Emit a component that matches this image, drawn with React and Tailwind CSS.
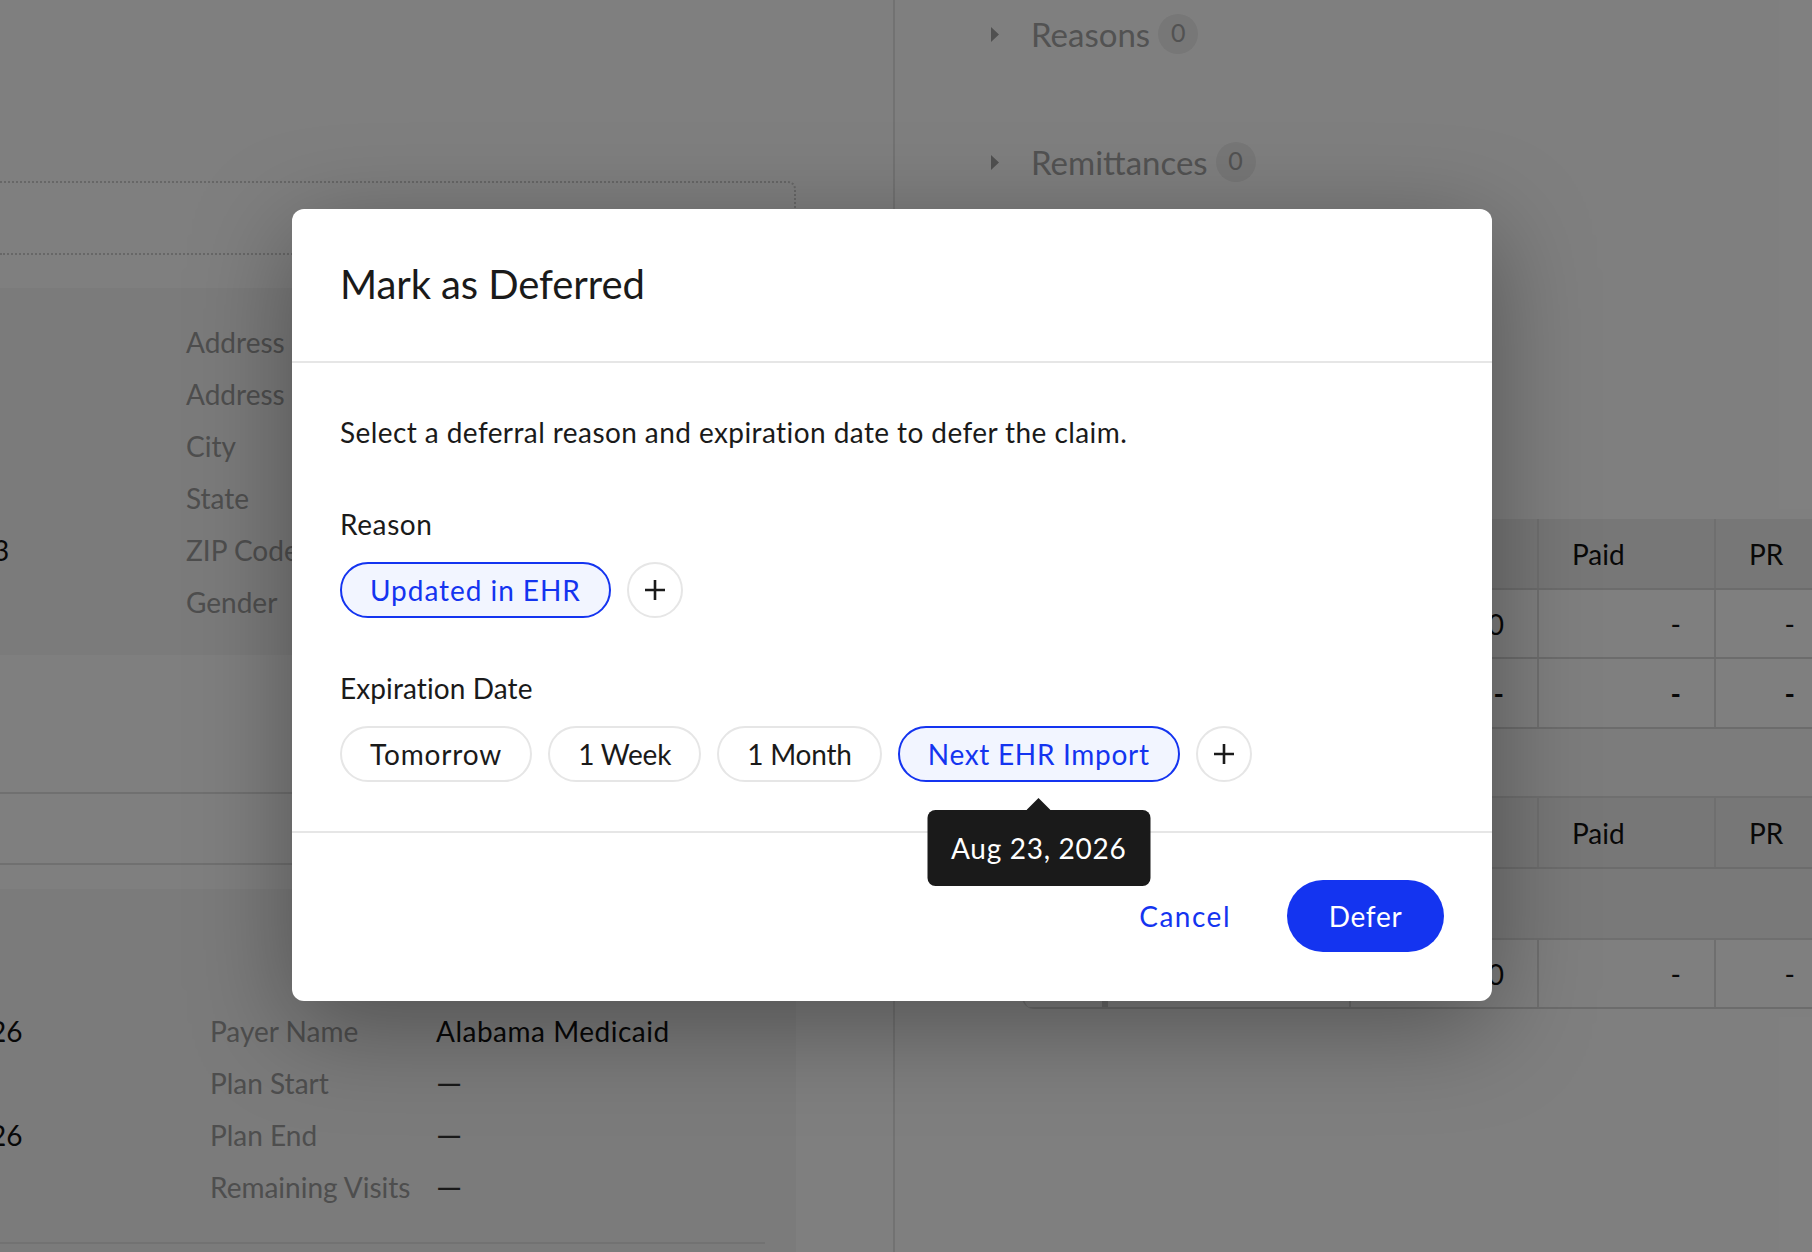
import React from "react";

function InfoRow({ value, label, labelClass }) {
  return (
    <div className="flex h-[52px] items-center">
      <div className="w-[186px] shrink-0 text-[#111]">
        <span className="-ml-[7px] block">{value}</span>
      </div>
      <div className={labelClass}>{label}</div>
    </div>
  );
}

function Accordion({ title, className }) {
  return (
    <div className={"ml-[96px] flex h-[40px] items-center text-[33px] text-[#a4a4a4] " + className}>
      <svg width="8" height="15" viewBox="0 0 8 15" className="mr-[32px]">
        <path d="M0 0L8 7.5L0 15Z" fill="#a0a0a0" />
      </svg>
      <span className="pt-[1px]">{title}</span>
      <span className="ml-[8px] flex h-[40px] w-[40px] items-center justify-center rounded-full bg-[#eeeeee] pb-[3px] text-[25px]">
        0
      </span>
    </div>
  );
}

function TableRow({ cells, header, strong, height }) {
  return (
    <div
      className={
        "grid w-[806px] grid-cols-[84px_243px_188px_177px_114px] border-b-2 border-[#d9d9d9] " +
        height +
        (header ? " bg-[#eeeeee] text-left" : " text-right")
      }
    >
      {cells.map((cell, i) => (
        <div
          key={i}
          className={
            "flex items-center px-[33px] text-[28px] text-[#111] " +
            (i === 0 ? "border-r-[6px] border-[#d2d2d2] " : "border-r-2 border-[#dedede] ") +
            (header ? "justify-start " : "justify-end ") +
            (strong ? "font-bold" : "")
          }
        >
          {cell}
        </div>
      ))}
    </div>
  );
}

function Chip({ label, selected, className, children }) {
  return (
    <div
      className={
        "relative flex h-[56px] items-center rounded-full border-2 px-[28px] text-[28px] " +
        (selected
          ? "border-[#1434f0] bg-[#f2f5ff] text-[#1434f0] "
          : "border-[#e6e6e6] bg-white text-[#1a1a1a] ") +
        className
      }
    >
      {label}
      {children}
    </div>
  );
}

function AddChip() {
  return (
    <div className="flex h-[56px] w-[56px] items-center justify-center rounded-full border-2 border-[#e6e6e6] bg-white">
      <svg width="20" height="20" viewBox="0 0 20 20">
        <path d="M10 0V20M0 10H20" stroke="#1a1a1a" strokeWidth="2.6" fill="none" />
      </svg>
    </div>
  );
}

export default function App() {
  const leftLabel = "w-[250px] shrink-0 text-[#9c9c9c]";
  return (
    <div className="relative flex h-screen w-full overflow-hidden bg-white font-[Lato,sans-serif] text-[28px]">
      {/* page behind the dialog */}
      <div className="h-full w-[895px] shrink-0 border-r-2 border-[#e4e4e4]">
        <div className="h-full w-[796px]">
          <div className="h-[181px]" />
          <div className="h-[74px] rounded-tr-lg border-t-2 border-r-2 border-b-2 border-dotted border-[#cfcfcf]" />
          <div className="h-[33px]" />
          <div className="h-[367px] bg-[#f6f6f6] pt-[28px]">
            <InfoRow value="" label="Address" labelClass={leftLabel} />
            <InfoRow value="" label="Address" labelClass={leftLabel} />
            <InfoRow value="" label="City" labelClass={leftLabel} />
            <InfoRow value="" label="State" labelClass={leftLabel} />
            <InfoRow value="3" label="ZIP Code" labelClass={leftLabel} />
            <InfoRow value="" label="Gender" labelClass={leftLabel} />
          </div>
          <div className="h-[137px]" />
          <div className="h-[73px] border-y-2 border-[#e0e0e0]" />
          <div className="h-[24px]" />
          <div className="h-[364px] bg-[#f6f6f6] pt-[116px]">
            {[
              ["26", "Payer Name", "Alabama Medicaid"],
              ["", "Plan Start", "—"],
              ["26", "Plan End", "—"],
              ["", "Remaining Visits", "—"],
            ].map(([value, label, detail]) => (
              <div key={label} className="flex h-[52px] items-center">
                <div className="w-[210px] shrink-0 text-[#111]">
                  <span className="-ml-[10px] block">{value}</span>
                </div>
                <div className="w-[226px] shrink-0 text-[#9c9c9c]">{label}</div>
                <div
                  className={
                    detail === "—" ? "text-[33px] text-[#333]" : "tracking-[0.5px] text-[#111]"
                  }
                >
                  {detail}
                </div>
              </div>
            ))}
            <div className="mt-[29px] h-[2px] w-[765px] bg-[#e4e4e4]" />
          </div>
        </div>
      </div>

      <div className="min-w-0 flex-1 pt-[14px]">
        <Accordion title="Reasons" />
        <Accordion title="Remittances" className="mt-[88px]" />
        <div className="ml-[127px] mt-[337px] w-[808px] overflow-hidden rounded-bl-xl border-l-2 border-[#dedede]">
          <TableRow header height="h-[71px]" cells={["", "", "", "Paid", "PR"]} />
          <TableRow height="h-[69px]" cells={["", "", "0", "-", "-"]} />
          <TableRow strong height="h-[70px]" cells={["", "", "-", "-", "-"]} />
          <div className="h-[69px] border-b-2 border-[#dedede] bg-[#f8f8f8]" />
          <TableRow header height="h-[71px]" cells={["", "", "", "Paid", "PR"]} />
          <div className="h-[71px] border-b-2 border-[#dedede] bg-[#f2f2f2]" />
          <TableRow height="h-[69px]" cells={["", "", "0", "-", "-"]} />
        </div>
      </div>

      {/* overlay */}
      <div className="absolute inset-0 bg-black/50" />

      {/* dialog */}
      <div className="absolute left-[292px] top-[209px] w-[1200px] rounded-xl bg-white text-[#1a1a1a] shadow-[0_24px_100px_rgba(0,0,0,0.35)]">
        <div className="flex h-[154px] items-center border-b-2 border-[#e6e6e6] px-[48px] pb-[3px] text-[40px] tracking-[-0.1px]">
          Mark as Deferred
        </div>
        <div className="border-b-2 border-[#e6e6e6] px-[48px] pb-[49px] pt-[49px]">
          <div className="h-[40px] leading-[40px] tracking-[0.42px]">
            Select a deferral reason and expiration date to defer the claim.
          </div>
          <div className="mt-[52px] h-[40px] leading-[40px] tracking-[0.6px]">Reason</div>
          <div className="mt-[18px] flex gap-[16px]">
            <Chip label="Updated in EHR" selected className="tracking-[0.95px]" />
            <AddChip />
          </div>
          <div className="mt-[50px] h-[40px] leading-[40px] tracking-[0.1px]">Expiration Date</div>
          <div className="mt-[18px] flex gap-[16px]">
            <Chip label="Tomorrow" className="tracking-[0.85px]" />
            <Chip label="1 Week" className="tracking-[-0.2px]" />
            <Chip label="1 Month" className="tracking-[-0.2px]" />
            <Chip label="Next EHR Import" selected className="tracking-[0.7px]">
              <div className="absolute left-1/2 top-full z-10 mt-[18px] -translate-x-1/2">
                <svg width="24" height="12" viewBox="0 0 24 12" className="mx-auto block">
                  <path d="M0 12L12 0L24 12Z" fill="#1a1a1a" />
                </svg>
                <div className="flex h-[76px] w-[223px] items-center justify-center rounded-lg bg-[#1a1a1a] text-white">
                  Aug 23, 2026
                </div>
              </div>
            </Chip>
            <AddChip />
          </div>
        </div>
        <div className="flex items-center justify-end px-[48px] pb-[49px] pt-[47px]">
          <span className="mr-[56px] tracking-[1.5px] text-[#1434f0]">Cancel</span>
          <div className="flex h-[72px] w-[157px] items-center justify-center rounded-full bg-[#1434f0] tracking-[0.7px] text-white">
            Defer
          </div>
        </div>
      </div>
    </div>
  );
}
